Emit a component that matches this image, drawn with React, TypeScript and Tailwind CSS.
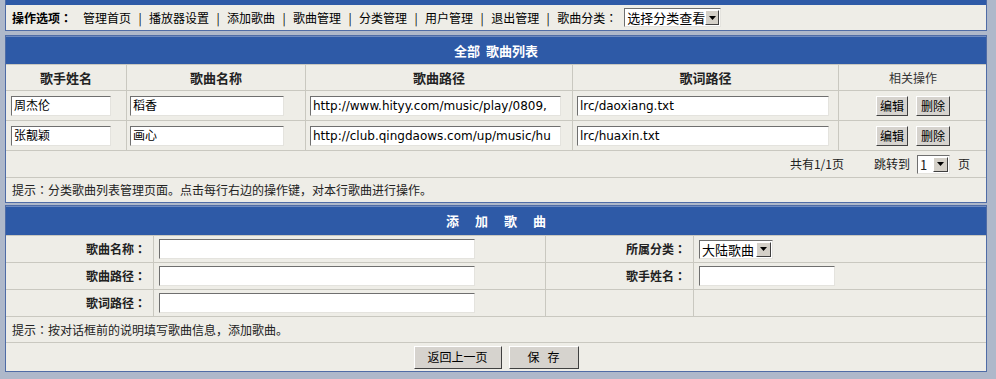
import React from "react";

function Colon() {
  return <span className="font-['Noto_Sans_CJK_TC',sans-serif]">：</span>;
}

function TextBox({ value = "", w }: { value?: string; w: string }) {
  return (
    <div
      className={`h-[20px] bg-white border border-t-[#6f6f6f] border-l-[#6f6f6f] border-r-[#e4e3de] border-b-[#e4e3de] overflow-hidden whitespace-nowrap px-[2px] flex items-center font-['DejaVu_Sans','Noto_Sans_CJK_SC',sans-serif] text-[12px] text-black ${w}`}
    >
      {value}
    </div>
  );
}

function Arrow() {
  return (
    <div className="w-[15px] h-[15px] bg-[#d4d0c8] border border-t-white border-l-white border-r-[#404040] border-b-[#404040] flex items-center justify-center">
      <svg width="7" height="4" viewBox="0 0 7 4">
        <polygon points="0,0 7,0 3.5,4" fill="#000" />
      </svg>
    </div>
  );
}

function Select({ label, w }: { label: string; w: string }) {
  return (
    <div
      className={`h-[19px] bg-white border border-t-[#6f6f6f] border-l-[#6f6f6f] border-r-[#e4e3de] border-b-[#e4e3de] flex items-center justify-between pl-[2px] pr-[1px] ${w}`}
    >
      <span className="text-[13px] leading-none whitespace-nowrap">{label}</span>
      <Arrow />
    </div>
  );
}

function Btn({ children, w, h = "h-[20px]" }: { children: React.ReactNode; w: string; h?: string }) {
  return (
    <div
      className={`${w} ${h} bg-[#d6d3ce] border border-t-white border-l-white border-r-[#404040] border-b-[#404040] flex items-center justify-center text-[12px] whitespace-pre`}
    >
      {children}
    </div>
  );
}

const navItems = ["管理首页", "播放器设置", "添加歌曲", "歌曲管理", "分类管理", "用户管理", "退出管理"];

const songs = [
  {
    singer: "周杰伦",
    name: "稻香",
    path: "http://www.hityy.com/music/play/0809,",
    lrc: "lrc/daoxiang.txt",
  },
  {
    singer: "张靓颖",
    name: "画心",
    path: "http://club.qingdaows.com/up/music/hu",
    lrc: "lrc/huaxin.txt",
  },
];

export default function App() {
  return (
    <div className="w-[996px] h-[379px] overflow-hidden bg-[#aeb8ca] pl-[5px] pr-[9px] font-['Noto_Sans_CJK_SC',sans-serif] text-[12px] text-black">
      {/* Panel 1: navigation */}
      <div className="border-x border-b border-[#4f6ca6] bg-[#eeede7]">
        <div className="h-[5px] bg-[#2e5aa7]" />
        <div className="h-[25px] flex items-center pl-[6px]">
          <span className="font-bold">
            操作选项<Colon />
          </span>
          <div className="flex items-center ml-[11px]">
            {navItems.map((t) => (
              <React.Fragment key={t}>
                <span>{t}</span>
                <span className="w-[18px] text-center">|</span>
              </React.Fragment>
            ))}
            <span>
              歌曲分类<Colon />
            </span>
          </div>
          <div className="ml-[7px]">
            <Select label="选择分类查看" w="w-[97px]" />
          </div>
        </div>
      </div>

      {/* Panel 2: song list */}
      <div className="mt-[4px] border border-[#4f6ca6] bg-[#eeede7]">
        <div className="h-[28px] bg-[#2e5aa7] border-t border-[#6d8ac0] flex items-center justify-center text-white font-bold text-[13px]">
          <span>全部</span>
          <span className="ml-[6px]">歌曲列表</span>
        </div>
        <div className="grid grid-cols-[120px_179px_267px_266px_149px] h-[26px] border-t border-[#c9c8c0] font-bold text-[13px] text-[#222]">
          <div className="flex items-center justify-center">歌手姓名</div>
          <div className="flex items-center justify-center border-l border-[#c9c8c0]">歌曲名称</div>
          <div className="flex items-center justify-center border-l border-[#c9c8c0]">歌曲路径</div>
          <div className="flex items-center justify-center border-l border-[#c9c8c0]">歌词路径</div>
          <div className="flex items-center justify-center border-l border-[#c9c8c0] font-normal text-[12px] text-[#333]">相关操作</div>
        </div>
        {songs.map((s) => (
          <div
            key={s.singer}
            className="grid grid-cols-[120px_179px_267px_266px_149px] h-[30px] border-t border-[#c9c8c0]"
          >
            <div className="flex items-center pl-[5px]">
              <TextBox value={s.singer} w="w-[100px]" />
            </div>
            <div className="flex items-center pl-[3px] border-l border-[#c9c8c0]">
              <TextBox value={s.name} w="w-[154px]" />
            </div>
            <div className="flex items-center pl-[4px] border-l border-[#c9c8c0]">
              <TextBox value={s.path} w="w-[251px]" />
            </div>
            <div className="flex items-center pl-[4px] border-l border-[#c9c8c0]">
              <TextBox value={s.lrc} w="w-[252px]" />
            </div>
            <div className="flex items-center justify-center gap-[8px] border-l border-[#c9c8c0]">
              <Btn w="w-[32px]">编辑</Btn>
              <Btn w="w-[34px]">删除</Btn>
            </div>
          </div>
        ))}
        <div className="h-[27px] border-t border-[#c9c8c0] flex items-center justify-end pr-[16px] text-[#222]">
          <span>共有1/1页</span>
          <span className="ml-[30px]">跳转到</span>
          <div className="ml-[7px]">
            <Select label="1" w="w-[33px]" />
          </div>
          <span className="ml-[8px]">页</span>
        </div>
        <div className="h-[25px] border-t border-[#c9c8c0] flex items-center pl-[6px] text-[#222]">
          <span>
            提示<Colon />分类歌曲列表管理页面。点击每行右边的操作键，对本行歌曲进行操作。
          </span>
        </div>
      </div>

      {/* Panel 3: add song */}
      <div className="mt-[2px] border border-[#4f6ca6] bg-[#eeede7]">
        <div className="h-[29px] bg-[#2e5aa7] border-t border-[#6d8ac0] flex items-center justify-center gap-[16px] text-white font-bold text-[13px]">
          <span>添</span>
          <span>加</span>
          <span>歌</span>
          <span>曲</span>
        </div>
        <div className="grid grid-cols-[147px_392px_148px_294px] h-[27px] border-t border-[#c9c8c0]">
          <div className="flex items-center justify-end pr-[7px] font-bold text-[#222]">
            歌曲名称<Colon />
          </div>
          <div className="flex items-center pl-[5px] border-l border-[#c9c8c0]">
            <TextBox w="w-[316px]" />
          </div>
          <div className="flex items-center justify-end pr-[7px] border-l border-[#c9c8c0] font-bold text-[#222]">
            所属分类<Colon />
          </div>
          <div className="flex items-center pl-[5px] border-l border-[#c9c8c0]">
            <Select label="大陆歌曲" w="w-[74px]" />
          </div>
        </div>
        <div className="grid grid-cols-[147px_392px_148px_294px] h-[27px] border-t border-[#c9c8c0]">
          <div className="flex items-center justify-end pr-[7px] font-bold text-[#222]">
            歌曲路径<Colon />
          </div>
          <div className="flex items-center pl-[5px] border-l border-[#c9c8c0]">
            <TextBox w="w-[316px]" />
          </div>
          <div className="flex items-center justify-end pr-[7px] border-l border-[#c9c8c0] font-bold text-[#222]">
            歌手姓名<Colon />
          </div>
          <div className="flex items-center pl-[5px] border-l border-[#c9c8c0]">
            <TextBox w="w-[136px]" />
          </div>
        </div>
        <div className="grid grid-cols-[147px_392px_148px_294px] h-[27px] border-t border-[#c9c8c0]">
          <div className="flex items-center justify-end pr-[7px] font-bold text-[#222]">
            歌词路径<Colon />
          </div>
          <div className="flex items-center pl-[5px] border-l border-[#c9c8c0]">
            <TextBox w="w-[316px]" />
          </div>
          <div className="border-l border-[#c9c8c0]" />
          <div className="border-l border-[#c9c8c0]" />
        </div>
        <div className="h-[26px] border-t border-[#c9c8c0] flex items-center pl-[6px] text-[#222]">
          <span>
            提示<Colon />按对话框前的说明填写歌曲信息，添加歌曲。
          </span>
        </div>
        <div className="h-[29px] border-t border-[#c9c8c0] flex items-center justify-center gap-[7px]">
          <Btn w="w-[88px]" h="h-[23px]">返回上一页</Btn>
          <Btn w="w-[70px]" h="h-[23px]">{"保   存"}</Btn>
        </div>
      </div>
    </div>
  );
}
